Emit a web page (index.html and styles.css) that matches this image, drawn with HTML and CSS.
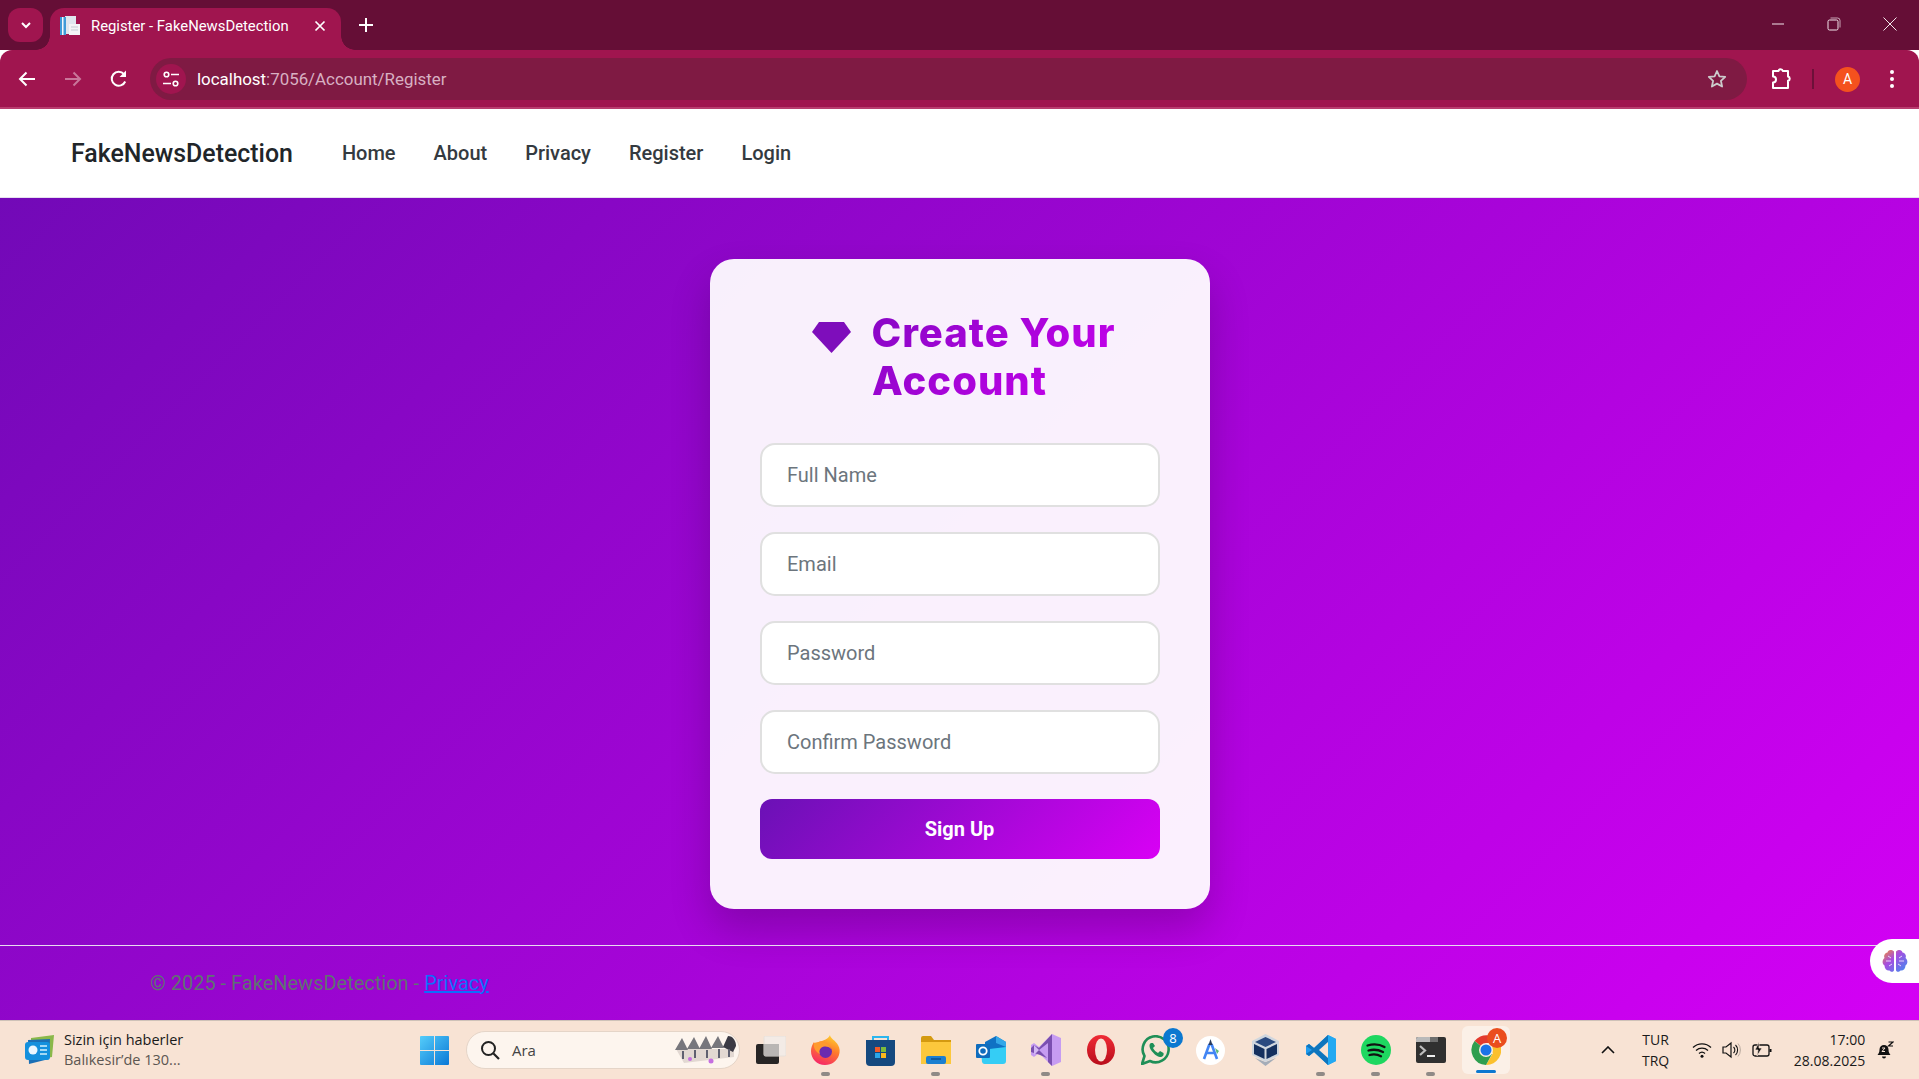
FILE: index.html
```html
<!DOCTYPE html>
<html lang="en">
<head>
    <meta charset="UTF-8">
    <meta name="viewport" content="width=device-width, initial-scale=1.0">
    <title>Register - FakeNewsDetection</title>
    <link rel="stylesheet" href="styles.css">
</head>
<body>

<!-- Browser window top -->
<div class="tab-strip">
    <div class="tab-search">
        <svg width="14" height="14" viewBox="0 0 14 14"><path d="M3 5l4 4 4-4" fill="none" stroke="#fff" stroke-width="2"/></svg>
    </div>
    <div class="tab">
        <svg class="favicon" width="20" height="20" viewBox="0 0 20 20">
            <rect x="5" y="0" width="11" height="18" fill="#dfe6ee"/>
            <rect x="0" y="1" width="6" height="18" fill="#3f9ad8"/>
            <rect x="2" y="1" width="1.5" height="18" fill="#f3f7fb"/>
            <rect x="9" y="8" width="11" height="11" fill="#f4f4f6"/>
            <path d="M11 11h7M11 14h7" stroke="#c4cbd3"/>
        </svg>
        <span class="tab-title">Register - FakeNewsDetection</span>
        <svg class="tab-close" width="12" height="12" viewBox="0 0 12 12"><path d="M1.5 1.5l9 9M10.5 1.5l-9 9" stroke="#fff" stroke-width="1.7"/></svg>
    </div>
    <svg class="new-tab" width="14" height="14" viewBox="0 0 14 14"><path d="M7 0v14M0 7h14" stroke="#fff" stroke-width="2"/></svg>
    <div class="window-controls">
        <div class="window-btn"><svg width="14" height="14" viewBox="0 0 14 14"><path d="M1 7h12" stroke="#f4e6ec" stroke-width="1"/></svg></div>
        <div class="window-btn"><svg width="14" height="14" viewBox="0 0 14 14"><rect x="1" y="3" width="10" height="10" rx="1.5" fill="none" stroke="#f4e6ec"/><path d="M3.5 1h7a2.5 2.5 0 0 1 2.5 2.5v7" fill="none" stroke="#f4e6ec" opacity=".7"/></svg></div>
        <div class="window-btn"><svg width="14" height="14" viewBox="0 0 14 14"><path d="M.5.5l13 13M13.5.5l-13 13" stroke="#f4e6ec" stroke-width="1"/></svg></div>
    </div>
</div>

<div class="toolbar">
    <div class="nav-btn"><svg width="20" height="20" viewBox="0 0 20 20"><path d="M18 10H3M9.5 3.5L3 10l6.500 6.500" fill="none" stroke="#fff" stroke-width="2"/></svg></div>
    <div class="nav-btn"><svg width="20" height="20" viewBox="0 0 20 20"><path d="M2 10h15M10.500 3.500L17 10l-6.500 6.500" fill="none" stroke="#c9769a" stroke-width="2"/></svg></div>
    <div class="nav-btn"><svg width="20" height="20" viewBox="0 0 20 20"><path d="M16.200 12.500A7 7 0 1 1 15 5.100" fill="none" stroke="#fff" stroke-width="2"/><path d="M17 1.500V8h-6.500z" fill="#fff"/></svg></div>
    <div class="omnibox">
        <div class="site-icon">
            <svg width="18" height="18" viewBox="0 0 18 18"><circle cx="4.500" cy="4.500" r="2.300" fill="none" stroke="#fff" stroke-width="1.600"/><path d="M9 4.500h8M1 13.500h8" stroke="#fff" stroke-width="1.600"/><circle cx="13.500" cy="13.500" r="2.300" fill="none" stroke="#fff" stroke-width="1.600"/></svg>
        </div>
        <span class="url"><span class="url-host">localhost</span>:7056/Account/Register</span>
        <svg class="star" width="20" height="20" viewBox="0 0 20 20"><path d="M10 2l2.400 5.300 5.800.6-4.300 3.900 1.200 5.700-5.100-2.900-5.100 2.900 1.200-5.700L1.800 7.900l5.800-.6z" fill="none" stroke="#ccc" stroke-width="1.800" stroke-linejoin="round"/></svg>
    </div>
    <svg class="ext-icon" width="22" height="22" viewBox="0 0 22 22"><path d="M2 3h5.500a2.200 2.200 0 0 1 4.300 0H17v5.500a2.200 2.200 0 0 1 0 4.300V20H2v-5.500a3 3 0 0 0 0-6z" fill="none" stroke="#fff" stroke-width="2" stroke-linejoin="round"/></svg>
    <div class="toolbar-divider"></div>
    <div class="avatar">A</div>
    <div class="menu-dots"><i></i><i></i><i></i></div>
</div>

<header class="navbar">
    <a class="brand" href="#">FakeNewsDetection</a>
    <nav class="nav-links">
        <a href="#">Home</a>
        <a href="#">About</a>
        <a href="#">Privacy</a>
        <a href="#">Register</a>
        <a href="#">Login</a>
    </nav>
</header>

<main class="page">
    <section class="card-wrap">
        <form class="register-card">
            <h2 class="card-title"><svg class="gem" width="39" height="31" viewBox="0 0 39 31"><path d="M7 0h25l7 10-19.500 21L0 10z" fill="#7e0dbb"/></svg>Create Your Account</h2>
            <input class="field" type="text" placeholder="Full Name">
            <input class="field" type="email" placeholder="Email">
            <input class="field" type="password" placeholder="Password">
            <input class="field" type="password" placeholder="Confirm Password">
            <button class="signup" type="button">Sign Up</button>
        </form>
    </section>

    <footer class="page-footer">
        <p>&copy; 2025 - FakeNewsDetection - <a href="#">Privacy</a></p>
    </footer>

    <!-- Floating extension tab -->
    <div class="side-widget">
        <svg width="26" height="24" viewBox="0 0 26 24">
            <defs><linearGradient id="brain" x1="0" y1="0" x2="1" y2="1"><stop offset="0" stop-color="#f5902f"/><stop offset=".4" stop-color="#a64de0"/><stop offset="1" stop-color="#3d8ff0"/></linearGradient></defs>
            <path d="M12 2.500C9 0 6 1 5.500 3.500 2.500 4 1.500 7 2.500 9 0 11 0 15 2.500 16.500 2.500 20 5 22 7.500 21.500 9 23.500 12 23 12 21zM14 2.500C17 0 20 1 20.500 3.500 23.500 4 24.500 7 23.500 9 26 11 26 15 23.500 16.500 23.500 20 21 22 18.500 21.500 17 23.500 14 23 14 21z" fill="url(#brain)"/>
            <path d="M4 12h5M6 7l3 2M7 17l3-2M22 12h-5M20 7l-3 2M19 17l-3-2" stroke="#e6d8fa" stroke-width="1"/>
        </svg>
    </div>
</main>

<!-- Windows taskbar -->
<div class="taskbar">
    <div class="news">
        <svg width="30" height="30" viewBox="0 0 30 30">
            <path d="M6 3l23-3-2 22-21 4z" fill="#8ab84a"/>
            <path d="M3 5l22-1-1 20-20 5z" fill="#1b6fb5"/>
            <rect x="0" y="7" width="25" height="18" rx="3" fill="#1490dd"/>
            <circle cx="8" cy="15" r="4.500" fill="#eaf7ff"/>
            <path d="M15 11h7M15 15h7M15 19h7" stroke="#d4effc" stroke-width="1.600"/>
        </svg>
        <div class="news-text">
            <span class="news-title">Sizin için haberler</span>
            <span class="news-sub">Balıkesir’de 130...</span>
        </div>
    </div>

    <div class="task-item">
        <svg width="29" height="29" viewBox="0 0 29 29">
            <defs><linearGradient id="win" x1="0" y1="0" x2="1" y2="1"><stop offset="0" stop-color="#55cdfa"/><stop offset="1" stop-color="#0a78d6"/></linearGradient></defs>
            <path d="M1 0h13v14H0V1a1 1 0 0 1 1-1zM15 0h13a1 1 0 0 1 1 1v13H15zM0 15h14v14H1a1 1 0 0 1-1-1zM15 15h14v13a1 1 0 0 1-1 1H15z" fill="url(#win)"/>
        </svg>
    </div>

    <div class="search-box">
        <svg width="20" height="20" viewBox="0 0 20 20"><circle cx="8.500" cy="8.500" r="6.500" fill="none" stroke="#222" stroke-width="2"/><path d="M13.500 13.500L19 19" stroke="#222" stroke-width="2.200"/></svg>
        <span class="search-label">Ara</span>
        <svg class="search-art" width="62" height="30" viewBox="0 0 62 30">
            <path d="M2 14h50l8-6v14l-50 6z" fill="#e2d8d2"/>
            <path d="M1 15L8 3l6 12zM13 14l7-12 6 12zM25 14l7-13 6 13zM37 13l7-12 6 12z" fill="#77767c"/>
            <path d="M49 12l5-11c5 0 8 5 8 10l-3 6z" fill="#3b3a44"/>
            <path d="M9 16v8M21 15v8M33 15v8M45 14v9M55 14v8" stroke="#5f6070" stroke-width="2"/>
            <circle cx="16" cy="24" r="2" fill="#c56fe0"/><circle cx="37" cy="26" r="2.500" fill="#c56fe0"/>
        </svg>
    </div>

    <div class="task-apps">
        <!-- task view -->
        <div class="task-item">
            <svg width="30" height="28" viewBox="0 0 30 28"><rect x="0" y="8" width="23" height="20" rx="2" fill="#272525"/><rect x="8" y="0" width="22" height="20" rx="1.500" fill="#f1ece8" fill-opacity=".88" stroke="#e6e0da"/><rect x="8" y="8" width="15" height="12" fill="#b9b6b4"/></svg>
        </div>
        <!-- firefox -->
        <div class="task-item has-dot">
            <svg width="29" height="30" viewBox="0 0 29 30">
                <defs><linearGradient id="fox" x1=".7" y1="0" x2=".3" y2="1"><stop offset="0" stop-color="#ffd02e"/><stop offset=".45" stop-color="#ff7a2b"/><stop offset="1" stop-color="#f5246a"/></linearGradient></defs>
                <path d="M19 0c0 3 6 6 8 10 2 3 2 7 1 10-2 6-7 10-14 10C6 30 0 24 0 16c0-3 1-6 3-9l1 3c2-2 4-4 7-4 3-1 7-3 8-6z" fill="url(#fox)"/>
                <circle cx="14.500" cy="16.500" r="6.500" fill="#6a2bb0"/>
                <path d="M3 8c4-1 8-2 13 1 2 1 4 3 4 5-3-3-7-3-10-1-2 2-2 4-1 6-4-2-7-6-6-11z" fill="#ff9a2e"/>
            </svg>
        </div>
        <!-- store -->
        <div class="task-item">
            <svg width="29" height="31" viewBox="0 0 29 31"><path d="M7 6V2h15v4" fill="none" stroke="#2cb6ee" stroke-width="2"/><path d="M0 5h29v22a4 4 0 0 1-4 4H4a4 4 0 0 1-4-4z" fill="#15497f"/><rect x="9" y="12" width="5" height="5" fill="#f05a28"/><rect x="15" y="12" width="5" height="5" fill="#7dbb3c"/><rect x="9" y="18" width="5" height="5" fill="#2aa6e8"/><rect x="15" y="18" width="5" height="5" fill="#fbb81d"/></svg>
        </div>
        <!-- explorer -->
        <div class="task-item has-dot">
            <svg width="30" height="28" viewBox="0 0 30 28"><path d="M0 2a2 2 0 0 1 2-2h8l3 4h17v6H0z" fill="#d49a10"/><path d="M0 6h30v22H0z" fill="#fcc83c"/><rect x="5" y="20" width="20" height="8" rx="2" fill="#1b7fd0"/><path d="M10 23h10" stroke="#0c4f8f" stroke-width="1.500"/></svg>
        </div>
        <!-- outlook -->
        <div class="task-item">
            <svg width="30" height="28" viewBox="0 0 30 28"><path d="M9 6l11-6 10 6v12H9z" fill="#1071c4"/><path d="M20 0l10 6v5l-10-4z" fill="#33a7e8"/><path d="M5 14l25-3v14a3 3 0 0 1-3 3H9a3 3 0 0 1-3-2z" fill="#35cdf5"/><rect x="0" y="8" width="14" height="14" rx="1" fill="#0f6cbd"/><circle cx="7" cy="15" r="3.700" fill="none" stroke="#fff" stroke-width="1.800"/></svg>
        </div>
        <!-- visual studio -->
        <div class="task-item has-dot">
            <svg width="30" height="32" viewBox="0 0 30 32"><path d="M21 0l9 4v24l-9 4-13-13-5 4-3-2V11l3-2 5 4z" fill="#c69cf2"/><path d="M21 0v32l-4-4V9L8 16l8 8-7-3-9-3v-4l3-3 5 3z" fill="#7a4fb0"/><path d="M3 11v10l5-5z" fill="#d3b8f4"/></svg>
        </div>
        <!-- opera -->
        <div class="task-item">
            <svg width="28" height="30" viewBox="0 0 28 30">
                <defs><linearGradient id="opera" x1="0" y1="0" x2="0" y2="1"><stop offset="0" stop-color="#ef2b35"/><stop offset="1" stop-color="#b80d1b"/></linearGradient></defs>
                <ellipse cx="14" cy="15" rx="14" ry="15" fill="url(#opera)"/><ellipse cx="14" cy="15" rx="6" ry="11.500" fill="#f8e3d4"/>
            </svg>
        </div>
        <!-- whatsapp -->
        <div class="task-item">
            <svg width="30" height="30" viewBox="0 0 30 30"><path d="M1 29l2.500-8A13 13 0 1 1 9 26z" fill="none" stroke="#1f8f57" stroke-width="2.600" stroke-linejoin="round"/><path d="M10 8c-2 1-2 4 0 7s6 7 9 7 4-2 3.500-4l-3.500-2-2 2c-2-1-4-3-5-5l2-2-2-3z" fill="#1f8f57"/></svg>
            <span class="count-badge">8</span>
        </div>
        <!-- android studio -->
        <div class="task-item">
            <svg width="29" height="29" viewBox="0 0 29 29"><circle cx="14.500" cy="14.500" r="14.500" fill="#fff"/><path d="M13.500 8L8 23M15.500 8L21 23M10.500 17h8" stroke="#4285f4" stroke-width="2.600" fill="none"/><path d="M19 12l4 3-2 3z" fill="#5cb878"/><path d="M14.500 3l2 6h-4z" fill="#29395a"/></svg>
        </div>
        <!-- virtualbox -->
        <div class="task-item">
            <svg width="27" height="32" viewBox="0 0 27 32">
                <path d="M3 24l10.500 8L24 24l-10.500 4z" fill="#a5adb8"/>
                <path d="M13.500 0L27 7v14l-13.500 7L0 21V7z" fill="#cfd6de"/>
                <path d="M13.500 3L24 8l-10.500 5L3 8z" fill="#2a4a80"/>
                <path d="M2 10l10.500 5v10L2 20zM25 10l-10.500 5v10L25 20z" fill="#14305f"/>
            </svg>
        </div>
        <!-- vs code -->
        <div class="task-item has-dot">
            <svg width="30" height="30" viewBox="0 0 30 30"><path d="M22 0l8 4v22l-8 4L8 17l-5 4-3-2v-8l3-2 5 4z" fill="#1f9cf0"/><path d="M22 0v30l-14-13-5 4-3-2 6-4-6-4 3-2 5 4z" fill="#0e75bd"/><path d="M22 7v16l-9-8z" fill="#f8e3d4"/><path d="M22 0l8 4v22l-8 4z" fill="#23a9f2"/></svg>
        </div>
        <!-- spotify -->
        <div class="task-item has-dot">
            <svg width="30" height="30" viewBox="0 0 30 30"><circle cx="15" cy="15" r="15" fill="#1ed760"/><path d="M6.500 10.500c6-1.700 12-1.200 17 1.500M7.500 15.500c5-1.300 10-.8 14.500 1.500M8.500 20c4-1 8-.7 11.500 1.200" fill="none" stroke="#111" stroke-width="2.300" stroke-linecap="round"/></svg>
        </div>
        <!-- terminal -->
        <div class="task-item has-dot">
            <svg width="30" height="26" viewBox="0 0 30 26"><rect width="30" height="26" rx="2" fill="#303030"/><path d="M0 2a2 2 0 0 1 2-2h12v5H0z" fill="#b9b9b9"/><path d="M14 0h8v5h-8z" fill="#6e6e6e"/><path d="M4 9l5 4.500L4 18" fill="none" stroke="#bdbdbd" stroke-width="2.200"/><path d="M11 19h8" stroke="#eee" stroke-width="2"/></svg>
        </div>
        <!-- chrome, active -->
        <div class="task-item active-app">
            <svg width="30" height="30" viewBox="0 0 30 30">
                <path d="M15 15L3.500 6A15 15 0 0 1 28.500 8H15z" fill="#e33b2e"/>
                <path d="M15 15L28.500 8A15 15 0 0 1 15 30l7-12z" fill="#fbc02d"/>
                <path d="M15 15l6 4-6 11A15 15 0 0 1 3.500 6z" fill="#2e9e4f"/>
                <circle cx="15" cy="15" r="7" fill="#fbeee4"/><circle cx="15" cy="15" r="5.500" fill="#1a73e8"/>
            </svg>
            <span class="chrome-badge">A</span>
        </div>
    </div>

    <div class="tray">
        <svg class="tray-caret" width="14" height="8" viewBox="0 0 14 8"><path d="M1 7l6-6 6 6" fill="none" stroke="#111" stroke-width="1.600"/></svg>
        <div class="tray-lang"><span>TUR</span><span>TRQ</span></div>
        <svg class="tray-wifi" width="20" height="16" viewBox="0 0 20 16"><path d="M1 5.500a13 13 0 0 1 18 0M4 8.500a9 9 0 0 1 12 0M7 11.500a4.500 4.500 0 0 1 6 0" fill="none" stroke="#111" stroke-width="1.300"/><circle cx="10" cy="14.300" r="1.500" fill="#111"/></svg>
        <svg class="tray-sound" width="20" height="18" viewBox="0 0 20 18"><path d="M1 6v6h3l5 4V2L4 6z" fill="none" stroke="#111" stroke-width="1.200"/><path d="M11.500 6a4 4 0 0 1 0 6M13.500 4a7 7 0 0 1 0 10" fill="none" stroke="#111" stroke-width="1.100"/><path d="M16 2.500a10 10 0 0 1 0 13" fill="none" stroke="#b8a99e"/></svg>
        <svg class="tray-battery" width="20" height="18" viewBox="0 0 20 18"><rect x="1" y="4" width="16" height="11" rx="2" fill="none" stroke="#111" stroke-width="1.300"/><rect x="17.500" y="8" width="2" height="3" fill="#111"/><path d="M7 1L3 9h3l-1 6 5-8H7z" fill="#111" stroke="#f8e3d4" stroke-width=".7"/></svg>
        <div class="tray-clock"><span>17:00</span><span>28.08.2025</span></div>
        <svg class="tray-bell" width="17" height="19" viewBox="0 0 17 19"><path d="M7 4a4.500 4.500 0 0 0-4.500 4.500c0 3-1 4-2 5.500h13c-1-1.500-2-2.500-2-5.500A4.500 4.500 0 0 0 7 4z" fill="#111"/><path d="M5 15.500h4a2 2 0 0 1-4 0z" fill="#111"/><path d="M5 7h3L5 10.500h3M11.500 1H16l-4.500 4H16" fill="none" stroke="#f8e3d4" stroke-width="1"/><path d="M11.500 1H16l-4.500 4H16" fill="none" stroke="#111" stroke-width="1.200"/></svg>
    </div>
</div>

</body>
</html>
```

FILE: styles.css
```css
* {
    box-sizing: border-box;
}
html, body {
    margin: 0;
    padding: 0;
    height: 1079px;
    overflow: hidden;
}
body {
    display: flex;
    flex-direction: column;
    font-family: Roboto, "Liberation Sans", sans-serif;
    background-color: #fff;
}

/* browser tabs */
.tab-strip {
    height: 50px;
    flex: none;
    display: flex;
    align-items: flex-end;
    background-color: #650e36;
    padding-left: 8px;
}
.tab-search {
    width: 35px;
    height: 34px;
    margin-bottom: 8px;
    border-radius: 12px;
    background-color: #a0154f;
    display: flex;
    align-items: center;
    justify-content: center;
}
.tab {
    position: relative;
    width: 291px;
    height: 42px;
    margin-left: 7px;
    padding: 0 0 7px 10px;
    display: flex;
    align-items: center;
    background-color: #a0154f;
    border-radius: 14px 14px 0 0;
    color: #fff;
}
.tab::before,
.tab::after {
    content: "";
    position: absolute;
    bottom: 0;
    width: 14px;
    height: 14px;
}
.tab::before {
    left: -14px;
    background: radial-gradient(circle at 0 0, transparent 13.5px, #a0154f 14px);
}
.tab::after {
    right: -14px;
    background: radial-gradient(circle at 100% 0, transparent 13.5px, #a0154f 14px);
}
.favicon {
    flex: none;
}
.tab-title {
    margin-left: 11px;
    font-size: 14.85px;
    white-space: nowrap;
}
.tab-close {
    margin-left: 25px;
}
.new-tab {
    margin: 0 0 18px 18px;
}
.window-controls {
    margin-left: auto;
    margin-right: 1px;
    height: 50px;
    display: flex;
    align-self: flex-start;
}
.window-btn {
    width: 56px;
    padding-top: 17px;
    display: flex;
    justify-content: center;
}

/* browser toolbar */
.toolbar {
    height: 59px;
    flex: none;
    display: flex;
    align-items: center;
    padding: 1px 17px 0 4px;
    background-color: #a0154f;
    border-bottom: 2px solid #b93d6f;
    border-radius: 12px 12px 0 0;
}
.nav-btn {
    width: 46px;
    height: 40px;
    display: flex;
    align-items: center;
    justify-content: center;
}
.omnibox {
    flex: 1;
    height: 42px;
    margin-left: 8px;
    padding: 0 20px 0 6px;
    display: flex;
    align-items: center;
    border-radius: 21px;
    background-color: #7f1a43;
}
.site-icon {
    width: 30px;
    height: 30px;
    border-radius: 50%;
    background-color: #a0154f;
    display: flex;
    align-items: center;
    justify-content: center;
}
.url {
    margin-left: 11px;
    font-size: 16.9px;
    color: #d8b0c2;
}
.url-host {
    color: #fff;
}
.star {
    margin-left: auto;
}
.ext-icon {
    margin-left: 24px;
}
.toolbar-divider {
    width: 2px;
    height: 20px;
    margin-left: 19px;
    background-color: #6d1039;
}
.avatar {
    width: 25px;
    height: 25px;
    margin-left: 21px;
    border-radius: 50%;
    background-color: #f4511e;
    color: #fff;
    font-size: 14px;
    line-height: 25px;
    text-align: center;
}
.menu-dots {
    width: 20px;
    margin-left: 22px;
    display: flex;
    flex-direction: column;
    align-items: center;
    gap: 3px;
}
.menu-dots i {
    width: 4px;
    height: 4px;
    border-radius: 50%;
    background-color: #fff;
}

/* site navbar */
.navbar {
    height: 89px;
    flex: none;
    display: flex;
    align-items: center;
    padding-left: 71px;
    background-color: #fff;
    border-bottom: 1px solid #e6e0ef;
}
.brand {
    font-size: 24.9px;
    font-weight: 500;
    color: #212529;
    text-decoration: none;
}
.nav-links {
    display: flex;
    gap: 38px;
    margin-left: 49px;
}
.nav-links a {
    font-size: 20px;
    font-weight: 500;
    color: #343a40;
    text-decoration: none;
}

/* main page */
.page {
    position: relative;
    flex: 1;
    display: flex;
    flex-direction: column;
    background: linear-gradient(135deg, #7209b7, #d400f5);
}
.card-wrap {
    display: flex;
    justify-content: center;
    padding-top: 61px;
}
.register-card {
    width: 500px;
    height: 650px;
    padding: 50px;
    background-color: rgba(255, 255, 255, 0.94);
    border-radius: 24px;
    box-shadow: 0 20px 40px rgba(0, 0, 0, 0.2);
    display: flex;
    flex-direction: column;
}
.card-title {
    margin: 0 0 38px;
    font-family: Inter, "Open Sans", sans-serif;
    font-size: 40px;
    font-weight: 800;
    line-height: 48px;
    letter-spacing: 1px;
    text-align: center;
    background: linear-gradient(135deg, #7209b7, #d400f5);
    -webkit-background-clip: text;
    background-clip: text;
    color: transparent;
}
.gem {
    margin: 0 20px 0 9px;
    vertical-align: -6px;
}
.field {
    height: 64px;
    flex: none;
    margin-bottom: 25px;
    padding: 0 25.5px;
    border: 2px solid #e0e0e0;
    border-radius: 15px;
    background-color: #fff;
    font-family: Roboto, sans-serif;
    font-size: 20px;
    color: #212529;
}
.field::placeholder {
    color: #6c757d;
    opacity: 1;
}
.signup {
    height: 60px;
    flex: none;
    border: none;
    border-radius: 12px;
    background: linear-gradient(135deg, #6a11b5, #d900f5);
    color: #fff;
    font-family: Roboto, sans-serif;
    font-size: 20px;
    font-weight: 700;
}
.page-footer {
    margin-top: 36px;
    height: 75px;
    padding-left: 150px;
    display: flex;
    align-items: center;
    border-top: 1px solid #e8dcef;
}
.page-footer p {
    margin: 0;
    font-size: 20px;
    color: #5f7272;
}
.page-footer a {
    color: #0d6efd;
}
.side-widget {
    position: absolute;
    right: 0;
    bottom: 37px;
    width: 49px;
    height: 44px;
    padding-left: 12px;
    display: flex;
    align-items: center;
    background-color: #fff;
    border-radius: 22px 0 0 22px;
}

/* windows taskbar */
.taskbar {
    height: 59px;
    flex: none;
    display: flex;
    align-items: center;
    background-color: #f8e3d4;
    border-top: 1px solid #cfc2b8;
    font-family: "Open Sans", "Noto Sans", sans-serif;
    color: #1a1a1a;
}
.news {
    width: 407px;
    padding-left: 25px;
    display: flex;
    align-items: center;
    gap: 9px;
}
.news-text {
    display: flex;
    flex-direction: column;
    font-size: 14.5px;
    line-height: 20px;
}
.news-sub {
    color: #5c5651;
}
.task-item {
    position: relative;
    width: 55px;
    height: 48px;
    flex: none;
    display: flex;
    align-items: center;
    justify-content: center;
}
.has-dot::after {
    content: "";
    position: absolute;
    left: 23px;
    bottom: -2px;
    width: 9px;
    height: 4px;
    border-radius: 2px;
    background-color: #8f8a86;
}
.search-box {
    width: 274px;
    height: 38px;
    margin-left: 4px;
    padding: 0 3px 0 13px;
    display: flex;
    align-items: center;
    background-color: #fdf5ee;
    border: 1px solid #e5d5c8;
    border-radius: 19px;
}
.search-label {
    margin-left: 12px;
    font-size: 15px;
    color: #444;
}
.search-art {
    margin-left: auto;
}
.task-apps {
    display: flex;
    margin-left: 3px;
}
.count-badge,
.chrome-badge {
    position: absolute;
    top: 2px;
    right: 0;
    width: 20px;
    height: 20px;
    border-radius: 50%;
    color: #fff;
    font-size: 13px;
    line-height: 20px;
    text-align: center;
}
.count-badge {
    background-color: #0b78d0;
}
.chrome-badge {
    background-color: #ea4e1e;
    right: 3px;
}
.active-app {
    background-color: #fbf0e7;
    border-radius: 6px;
    width: 48px;
    margin-left: 4px;
}
.active-app::after {
    content: "";
    position: absolute;
    left: 14px;
    bottom: 1px;
    width: 20px;
    height: 3px;
    border-radius: 2px;
    background-color: #0b78d0;
}
.tray {
    display: flex;
    align-items: center;
    margin-left: 91px;
}
.tray-lang {
    display: flex;
    flex-direction: column;
    align-items: center;
    margin-left: 27px;
    font-size: 14px;
    line-height: 21px;
}
.tray-wifi {
    margin-left: 23px;
}
.tray-sound {
    margin-left: 10px;
}
.tray-battery {
    margin-left: 10px;
}
.tray-clock {
    width: 93px;
    display: flex;
    flex-direction: column;
    align-items: flex-end;
    font-size: 14px;
    line-height: 21px;
}
.tray-bell {
    margin-left: 12px;
}
```
